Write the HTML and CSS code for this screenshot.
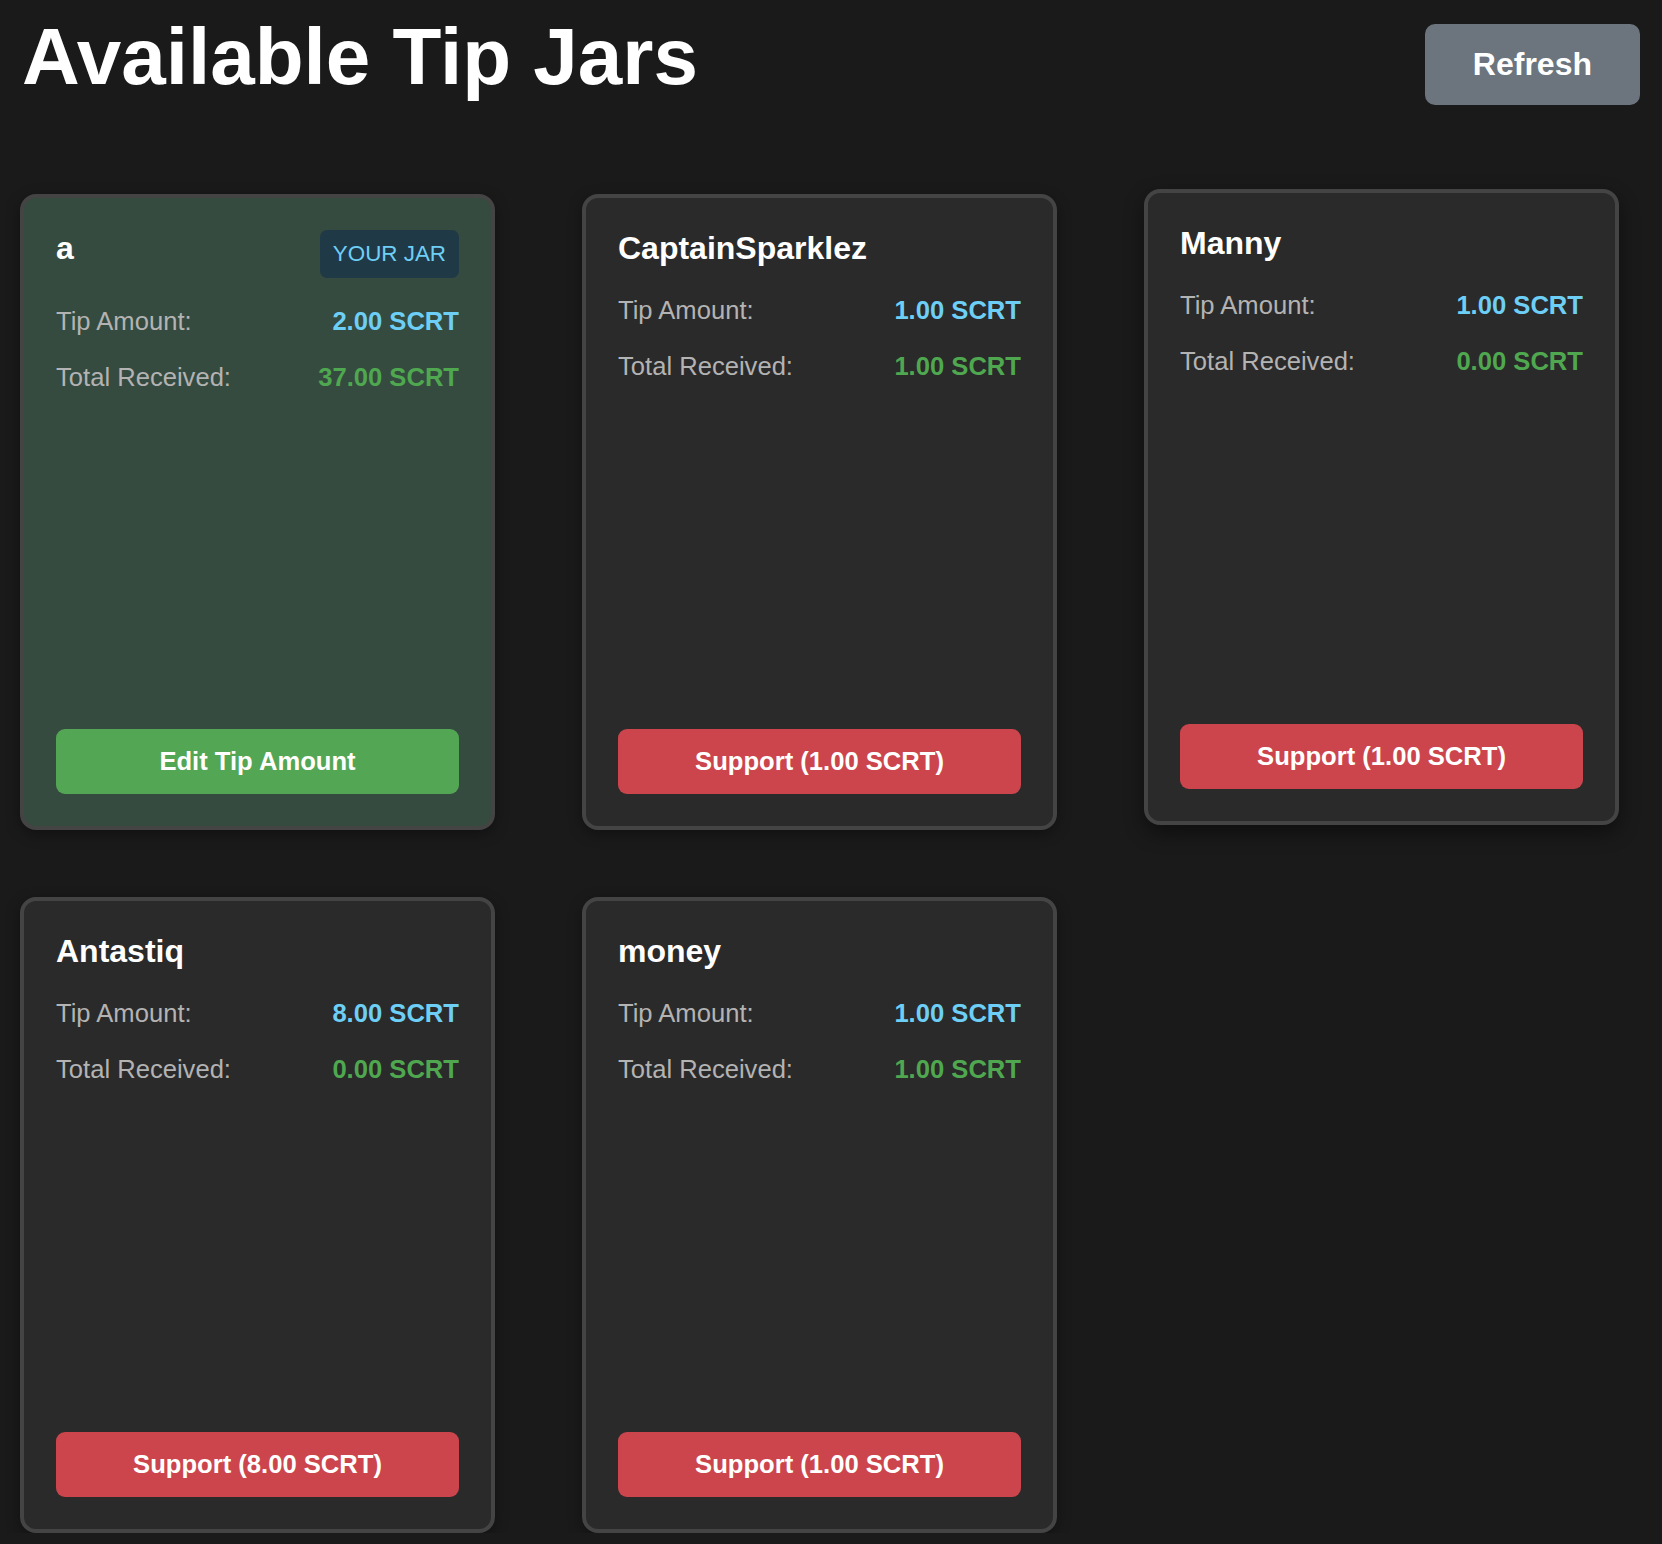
FILE: index.html
```html
<!DOCTYPE html>
<html lang="en">
<head>
    <meta charset="UTF-8">
    <meta name="viewport" content="width=device-width, initial-scale=1.0">
    <title>Tip Jars</title>

    <link rel="stylesheet" href="styles.css">

</head>
<body>
    <div class="page">
        <div class="page-header">
            <h1>Available Tip Jars</h1>
            <button class="btn btn-refresh">Refresh</button>
        </div>

        <div class="jar-grid">
            <div class="jar own">
                <div class="jar-head">
                    <h3>a</h3>
                    <span class="badge">YOUR JAR</span>
                </div>
                <div class="jar-row">
                    <span class="label">Tip Amount:</span>
                    <span class="value tip">2.00 SCRT</span>
                </div>
                <div class="jar-row">
                    <span class="label">Total Received:</span>
                    <span class="value total">37.00 SCRT</span>
                </div>
                <button class="btn btn-edit">Edit Tip Amount</button>
            </div>

            <div class="jar">
                <div class="jar-head">
                    <h3>CaptainSparklez</h3>
                </div>
                <div class="jar-row">
                    <span class="label">Tip Amount:</span>
                    <span class="value tip">1.00 SCRT</span>
                </div>
                <div class="jar-row">
                    <span class="label">Total Received:</span>
                    <span class="value total">1.00 SCRT</span>
                </div>
                <button class="btn btn-support">Support (1.00 SCRT)</button>
            </div>

            <div class="jar hover">
                <div class="jar-head">
                    <h3>Manny</h3>
                </div>
                <div class="jar-row">
                    <span class="label">Tip Amount:</span>
                    <span class="value tip">1.00 SCRT</span>
                </div>
                <div class="jar-row">
                    <span class="label">Total Received:</span>
                    <span class="value total">0.00 SCRT</span>
                </div>
                <button class="btn btn-support">Support (1.00 SCRT)</button>
            </div>

            <div class="jar">
                <div class="jar-head">
                    <h3>Antastiq</h3>
                </div>
                <div class="jar-row">
                    <span class="label">Tip Amount:</span>
                    <span class="value tip">8.00 SCRT</span>
                </div>
                <div class="jar-row">
                    <span class="label">Total Received:</span>
                    <span class="value total">0.00 SCRT</span>
                </div>
                <button class="btn btn-support">Support (8.00 SCRT)</button>
            </div>

            <div class="jar">
                <div class="jar-head">
                    <h3>money</h3>
                </div>
                <div class="jar-row">
                    <span class="label">Tip Amount:</span>
                    <span class="value tip">1.00 SCRT</span>
                </div>
                <div class="jar-row">
                    <span class="label">Total Received:</span>
                    <span class="value total">1.00 SCRT</span>
                </div>
                <button class="btn btn-support">Support (1.00 SCRT)</button>
            </div>
        </div>
    </div>
</body>
</html>
```

FILE: styles.css
```css
* {
    box-sizing: border-box;
    margin: 0;
    padding: 0;
    font-family: 'Liberation Sans', Arial, sans-serif;
}
body {
    background-color: #1a1a1a;
    color: #fff;
}
.page {
    padding: 0 22px 0 20px;
}
.page-header {
    display: flex;
    justify-content: space-between;
    align-items: flex-start;
}
.page-header h1 {
    font-size: 80px;
    line-height: 1;
    font-weight: bold;
    margin-top: 17px;
    padding-left: 2px;
}

.btn {
    border: none;
    color: #fff;
    font-weight: bold;
    cursor: pointer;
}
.btn-refresh {
    margin-top: 24px;
    background-color: #6c757d;
    font-size: 32px;
    padding: 22px 48px;
    border-radius: 10px;
}

.jar-grid {
    display: grid;
    grid-template-columns: repeat(3, 475px);
    column-gap: 87px;
    row-gap: 67px;
    margin-top: 89px;
    align-items: start;
}
.jar {
    min-height: 636px;
    background-color: #2a2a2a;
    border: 4px solid #444;
    border-radius: 16px;
    padding: 32px;
    display: flex;
    flex-direction: column;
    box-shadow: 0 4px 14px rgba(0, 0, 0, .35);
}
.jar.own {
    background-color: #354b3f;
}
/* card under the mouse */
.jar.hover {
    transform: translateY(-5px);
    box-shadow: 0 8px 20px rgba(0, 0, 0, .45);
}
.jar-head {
    display: flex;
    justify-content: space-between;
    align-items: flex-start;
    margin-bottom: 29px;
}
.jar-head h3 {
    font-size: 32px;
    font-weight: bold;
}
.badge {
    background-color: #203947;
    color: #6ecff6;
    font-size: 22.4px;
    line-height: 32px;
    padding: 8px 13px;
    border-radius: 7px;
}
.jar-row {
    display: flex;
    justify-content: space-between;
    font-size: 25.6px;
    margin-bottom: 27px;
}
.label {
    color: #b3b3b3;
}
.value {
    font-weight: bold;
}
.value.tip {
    color: #6ecff6;
}
.value.total {
    color: #4fa84f;
}

.jar .btn {
    margin-top: auto;
    width: 100%;
    font-size: 25.6px;
    padding: 18px;
    border-radius: 9px;
}
.btn-edit {
    background-color: #53a653;
}
.btn-support {
    background-color: #cc454c;
}
```
